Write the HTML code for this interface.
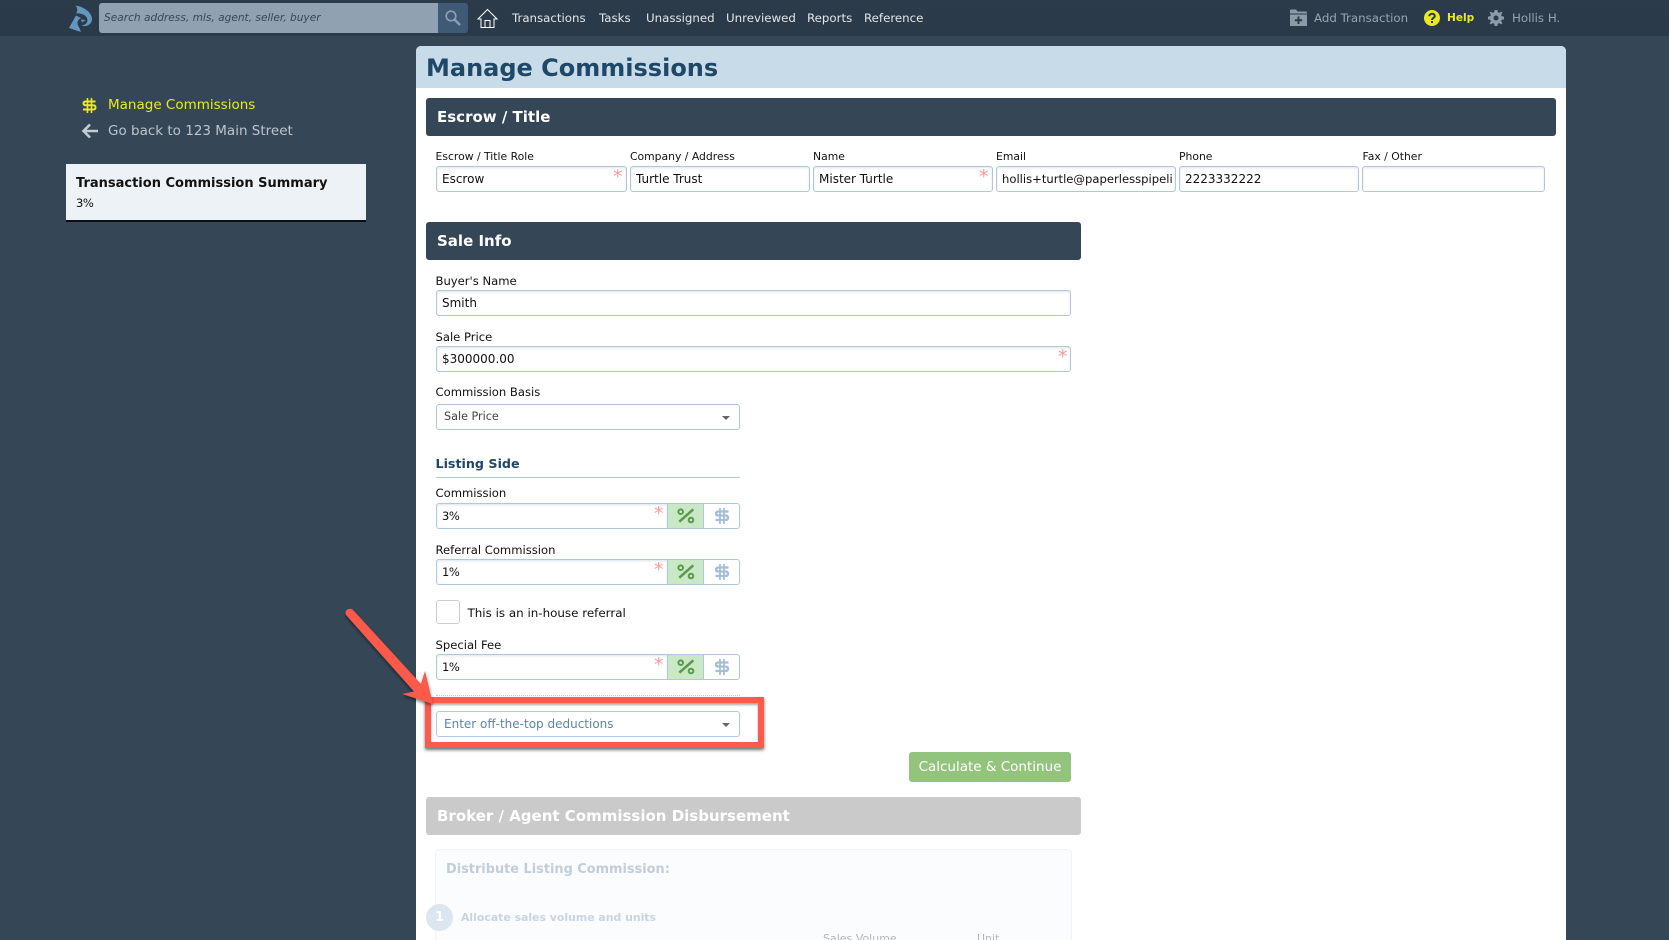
<!DOCTYPE html>
<html><head><meta charset="utf-8"><title>Manage Commissions</title>
<style>
*{box-sizing:border-box}
html,body{margin:0;padding:0;width:1669px;height:940px;overflow:hidden}
body{background:#354757;font-family:"DejaVu Sans","Liberation Sans",sans-serif;color:#111}
#w{position:absolute;left:0;top:0;width:1669px;height:940px;overflow:hidden;background:#354757}
.a{position:absolute;white-space:nowrap}
.nav{top:9px;line-height:18px;font-size:11.8px;color:#e1e6ea}
.top{background:linear-gradient(#2b3b4a,#2b3a49);position:absolute;left:0;top:0;width:1669px;height:36px}
.l{font-size:11.6px;line-height:16px;color:#111}
.l1{font-size:10.8px;line-height:16px;color:#111;top:149px}
.i{position:absolute;height:26px;background:#fff;border:1px solid #b1c8dc;border-radius:3px;box-shadow:inset 0 1px 2px rgba(120,150,180,.25);font-size:12px;line-height:24px;padding-left:5px;color:#111;white-space:nowrap;overflow:hidden}
.h{position:absolute;background:#354757;border-radius:3px;color:#fff;font-weight:bold;font-size:15px;line-height:39px;height:38px;padding-left:11px}
.ast{position:absolute;color:#fb9a9a;font-size:19px;line-height:17px}
.sel{position:absolute;height:26px;background:#fff;border:1px solid #b1c8dc;border-radius:3px;font-size:11.2px;line-height:24px;padding-left:7px;color:#444}
.car{position:absolute;right:9px;top:11px;width:0;height:0;border-left:4px solid transparent;border-right:4px solid transparent;border-top:4px solid #666}
.pc{position:absolute;width:36px;height:26px;background:#c9e9c6;border:1px solid #b1c8dc;border-right:0}
.dl{position:absolute;width:37px;height:26px;background:#fff;border:1px solid #b1c8dc;border-radius:0 3px 3px 0}
.n{font-size:11.5px;letter-spacing:-.5px}
</style></head><body><div id="w">

<div class="top"></div>

<!-- logo -->
<svg class="a" style="left:66px;top:2px" width="30" height="32" viewBox="66 2 30 32">
<path d="M69 28L76 15.500L81 18C77 20 76.500 24 79 27L81 32Z" fill="#6596bc"/>
<path d="M75.500 5.500C85 7 92 13 92 19C92 25 85 27.500 81.500 25.500C86 25 88.500 22 87 18C85 14 79 13 76 13.500C78 10.500 77.500 8 75.500 5.500Z" fill="#6596bc"/>
<path d="M81 19.500L85.500 20L82 22.500Z" fill="#6596bc"/>
</svg>

<div class="a" style="left:99px;top:3px;width:340px;height:30px;background:#90a2b1;border-radius:3px 0 0 3px;font-style:italic;font-size:10.6px;line-height:31px;padding-left:5px;color:#37475a">Search address, mls, agent, seller, buyer</div>
<div class="a" style="left:438px;top:3px;width:30px;height:30px;background:#3f5a74;border-radius:0 3px 3px 0"></div>
<svg class="a" style="left:444px;top:9px" width="18" height="18" viewBox="0 0 18 18" fill="none" stroke="#8c9fb0"><circle cx="7" cy="7" r="4.800" stroke-width="1.700"/><path d="M10.500 10.500L16 16" stroke-width="2.400"/></svg>
<svg class="a" style="left:477px;top:8px" width="21" height="21" viewBox="0 0 21 21" fill="none" stroke="#fff" stroke-width="1"><path d="M1 11L10.500 1.500L20 11H17V19.500H4V11Z"/><path d="M8 19.500V12.500H13V19.500"/></svg>

<div class="a nav" style="left:512px">Transactions</div>
<div class="a nav" style="left:599px">Tasks</div>
<div class="a nav" style="left:646px">Unassigned</div>
<div class="a nav" style="left:726px">Unreviewed</div>
<div class="a nav" style="left:807px">Reports</div>
<div class="a nav" style="left:864px">Reference</div>

<svg class="a" style="left:1290px;top:9px" width="17" height="17" viewBox="0 0 17 17"><path d="M0 1.500Q0 .5 1 .5H6L7.500 2.500H16Q17 2.500 17 3.500V4.500H0Z" fill="#8d9ba8"/><rect y="5.500" width="17" height="11.500" fill="#8d9ba8"/><path d="M8.500 7.500V15M4.800 11.200H12.200" stroke="#2b3a49" stroke-width="2"/></svg>
<div class="a nav" style="left:1314px;color:#98a5b1">Add Transaction</div>
<svg class="a" style="left:1424px;top:10px" width="16" height="16" viewBox="0 0 16 16"><circle cx="8" cy="8" r="8" fill="#eaea21"/><path d="M5.300 6.200C5.300 3 10.800 3 10.800 6C10.800 8 8 7.800 8 10" fill="none" stroke="#2b3a49" stroke-width="2"/><rect x="7" y="11" width="2" height="2" fill="#2b3a49"/></svg>
<div class="a nav" style="left:1447px;color:#eaea21;font-weight:bold;font-size:10.6px">Help</div>
<svg class="a" style="left:1488px;top:10px" width="16" height="16" viewBox="0 0 16 16"><path d="M6.600 0H9.400L9.800 2.300L11.200 2.900L13.200 1.600L14.400 2.800L13.100 4.800L13.700 6.200L16 6.600V9.400L13.700 9.800L13.100 11.200L14.400 13.200L13.200 14.400L11.200 13.100L9.800 13.700L9.400 16H6.600L6.200 13.700L4.800 13.100L2.800 14.400L1.600 13.200L2.900 11.200L2.300 9.800L0 9.400V6.600L2.300 6.200L2.900 4.800L1.600 2.800L2.800 1.600L4.800 2.900L6.200 2.300Z" fill="#8d9ba8"/><circle cx="8" cy="8" r="2.500" fill="#2b3a49"/></svg>
<div class="a nav" style="left:1512px;color:#98a5b1">Hollis H.</div>

<!-- left -->
<svg class="a" style="left:82px;top:97px" width="15" height="17" viewBox="0 0 15 17" fill="none" stroke="#eaea21" stroke-width="2"><path d="M13.500 4.500H4Q1.500 4.500 1.500 6.300Q1.500 8.300 4 8.300H11Q13.500 8.300 13.500 10.500Q13.500 12.500 11 12.500H1"/><path d="M5.500 1V16M9.500 1V16" stroke-width="1.600"/></svg>
<div class="a" style="left:108px;top:96px;font-size:13.5px;line-height:18px;color:#eaea21">Manage Commissions</div>
<svg class="a" style="left:81px;top:123px" width="17" height="16" viewBox="0 0 17 16" fill="none" stroke="#c4cbd2" stroke-width="2.600"><path d="M17 8H3M9 1.500L2.500 8L9 14.500"/></svg>
<div class="a" style="left:108px;top:122px;font-size:13.5px;line-height:18px;color:#bcc4cb">Go back to 123 Main Street</div>
<div class="a" style="left:66px;top:164px;width:300px;height:58px;background:#edf2f7;border-bottom:2px solid #0b0f14"></div>
<div class="a" style="left:76px;top:174px;font-size:13px;line-height:19px;font-weight:bold;color:#111">Transaction Commission Summary</div>
<div class="a n" style="left:76px;top:196px;line-height:15px;color:#111">3%</div>

<!-- panel -->
<div class="a" style="left:416px;top:46px;width:1150px;height:894px;background:#fff;border-radius:5px 5px 0 0"></div>
<div class="a" style="left:416px;top:46px;width:1150px;height:42px;background:#c8dbe9;border-radius:5px 5px 0 0"></div>
<div class="a" style="left:426px;top:51px;font-size:24px;line-height:34px;font-weight:bold;color:#1f4767">Manage Commissions</div>

<div class="h a" style="left:426px;top:98px;width:1130px">Escrow / Title</div>

<div class="a l1" style="left:435.500px">Escrow / Title Role</div>
<div class="a l1" style="left:630px">Company / Address</div>
<div class="a l1" style="left:813px">Name</div>
<div class="a l1" style="left:996px">Email</div>
<div class="a l1" style="left:1179px">Phone</div>
<div class="a l1" style="left:1362.500px">Fax / Other</div>

<div class="i" style="left:436px;top:166px;width:191px">Escrow</div><div class="ast" style="left:613px;top:169px">*</div>
<div class="i" style="left:630px;top:166px;width:180px">Turtle Trust</div>
<div class="i" style="left:813px;top:166px;width:180px">Mister Turtle</div><div class="ast" style="left:979px;top:169px">*</div>
<div class="i" style="left:996px;top:166px;width:180px;font-size:11.6px">hollis+turtle@paperlesspipeli</div>
<div class="i" style="left:1179px;top:166px;width:180px">2223332222</div>
<div class="i" style="left:1362px;top:166px;width:183px"></div>

<div class="h a" style="left:426px;top:222px;width:655px">Sale Info</div>

<div class="a l" style="left:435.500px;top:273px">Buyer's Name</div>
<div class="i" style="left:436px;top:290px;width:635px">Smith</div>
<div class="a l" style="left:435.500px;top:329px">Sale Price</div>
<div class="i" style="left:436px;top:346px;width:635px">$300000.00</div><div class="ast" style="left:1058px;top:349px">*</div>
<div class="a l" style="left:435.500px;top:384px">Commission Basis</div>
<div class="sel" style="left:436px;top:404px;width:304px">Sale Price<div class="car"></div></div>

<div class="a" style="left:435.500px;top:455px;font-size:12.7px;line-height:18px;font-weight:bold;color:#1f4767">Listing Side</div>
<div class="a" style="left:436px;top:477px;width:304px;height:1px;background:#b1c8dc"></div>

<div class="a l" style="left:435.500px;top:485px">Commission</div>
<div class="i n" style="left:436px;top:503px;width:232px;border-radius:3px 0 0 3px">3%</div><div class="ast" style="left:654px;top:506px">*</div>
<div class="pc" style="left:667px;top:503px"><svg width="35" height="24" viewBox="0 0 35 24" fill="none" stroke="#5c994c" stroke-width="2"><path d="M11.300 17.700L25.300 5.300" stroke-width="2.600"/><circle cx="12.700" cy="7.700" r="2.300"/><circle cx="23" cy="16" r="2.300"/></svg></div>
<div class="dl" style="left:703px;top:503px"><svg width="35" height="24" viewBox="0 0 35 24" fill="none" stroke="#a3bed6" stroke-width="2.300"><path d="M24.500 7.500H14.500Q12 7.500 12 9.500Q12 11.500 14.500 11.500H21.500Q24 11.500 24 13.800Q24 16 21.500 16H11.500"/><path d="M16 4V20M20 4V20" stroke-width="1.800"/></svg></div>

<div class="a l" style="left:435.500px;top:542px">Referral Commission</div>
<div class="i n" style="left:436px;top:559px;width:232px;border-radius:3px 0 0 3px">1%</div><div class="ast" style="left:654px;top:562px">*</div>
<div class="pc" style="left:667px;top:559px"><svg width="35" height="24" viewBox="0 0 35 24" fill="none" stroke="#5c994c" stroke-width="2"><path d="M11.300 17.700L25.300 5.300" stroke-width="2.600"/><circle cx="12.700" cy="7.700" r="2.300"/><circle cx="23" cy="16" r="2.300"/></svg></div>
<div class="dl" style="left:703px;top:559px"><svg width="35" height="24" viewBox="0 0 35 24" fill="none" stroke="#a3bed6" stroke-width="2.300"><path d="M24.500 7.500H14.500Q12 7.500 12 9.500Q12 11.500 14.500 11.500H21.500Q24 11.500 24 13.800Q24 16 21.500 16H11.500"/><path d="M16 4V20M20 4V20" stroke-width="1.800"/></svg></div>

<div class="a" style="left:436px;top:600px;width:24px;height:24px;background:#fff;border:1px solid #c9cdd1;border-radius:3px"></div>
<div class="a" style="left:467.500px;top:605px;font-size:11.9px;line-height:17px;color:#111">This is an in-house referral</div>

<div class="a l" style="left:435.500px;top:637px">Special Fee</div>
<div class="i n" style="left:436px;top:654px;width:232px;border-radius:3px 0 0 3px">1%</div><div class="ast" style="left:654px;top:657px">*</div>
<div class="pc" style="left:667px;top:654px"><svg width="35" height="24" viewBox="0 0 35 24" fill="none" stroke="#5c994c" stroke-width="2"><path d="M11.300 17.700L25.300 5.300" stroke-width="2.600"/><circle cx="12.700" cy="7.700" r="2.300"/><circle cx="23" cy="16" r="2.300"/></svg></div>
<div class="dl" style="left:703px;top:654px"><svg width="35" height="24" viewBox="0 0 35 24" fill="none" stroke="#a3bed6" stroke-width="2.300"><path d="M24.500 7.500H14.500Q12 7.500 12 9.500Q12 11.500 14.500 11.500H21.500Q24 11.500 24 13.800Q24 16 21.500 16H11.500"/><path d="M16 4V20M20 4V20" stroke-width="1.800"/></svg></div>

<div class="a" style="left:436px;top:695px;width:304px;border-top:1px dotted #ccc"></div>
<div class="sel" style="left:436px;top:711px;width:304px;color:#5a86ab;font-size:12px">Enter off-the-top deductions<div class="car"></div></div>

<!-- callout -->
<div class="a" style="left:425px;top:697px;width:339px;height:51px;border:6px solid #fb5a4c;box-shadow:0 2px 3px rgba(0,0,0,.55),inset 0 2px 2px rgba(0,0,0,.35)"></div>
<svg class="a" style="left:340px;top:600px;overflow:visible" width="110" height="120" viewBox="340 600 110 120">
<defs><filter id="s" x="-20%" y="-20%" width="140%" height="140%"><feDropShadow dx="0" dy="2" stdDeviation="1.500" flood-color="#000" flood-opacity=".5"/></filter></defs>
<path d="M346.500 615.500Q344 612 347.500 609.500Q351 607.500 353.500 610.500L421 684L425 671L433 704L402 694L414 691.500Z" fill="#fb5a4c" filter="url(#s)"/>
</svg>

<div class="a" style="left:909px;top:752px;width:162px;height:30px;background:#93c47d;border-radius:3px;color:#fff;font-size:13.500px;line-height:31px;text-align:center">Calculate &amp; Continue</div>

<div class="h a" style="left:426px;top:797px;width:655px;background:#cacaca">Broker / Agent Commission Disbursement</div>

<div class="a" style="left:435px;top:849px;width:637px;height:110px;background:#fbfcfd;border:1px solid #f1f4f7;border-radius:4px"></div>
<div class="a" style="left:446px;top:861px;font-size:12.9px;line-height:18px;font-weight:bold;color:#c2cdd9">Distribute Listing Commission:</div>
<div class="a" style="left:426px;top:904px;width:27px;height:27px;border-radius:50%;background:#dbe6f0;color:#fff;font-weight:bold;font-size:13px;line-height:27px;text-align:center">1</div>
<div class="a" style="left:461px;top:910px;font-size:10.9px;line-height:16px;font-weight:bold;color:#c8d5e0">Allocate sales volume and units</div>
<div class="a" style="left:823px;top:931px;font-size:11px;line-height:16px;color:#b5b5b5">Sales Volume</div>
<div class="a" style="left:977px;top:931px;font-size:11px;line-height:16px;color:#b5b5b5">Unit</div>

</div></body></html>
